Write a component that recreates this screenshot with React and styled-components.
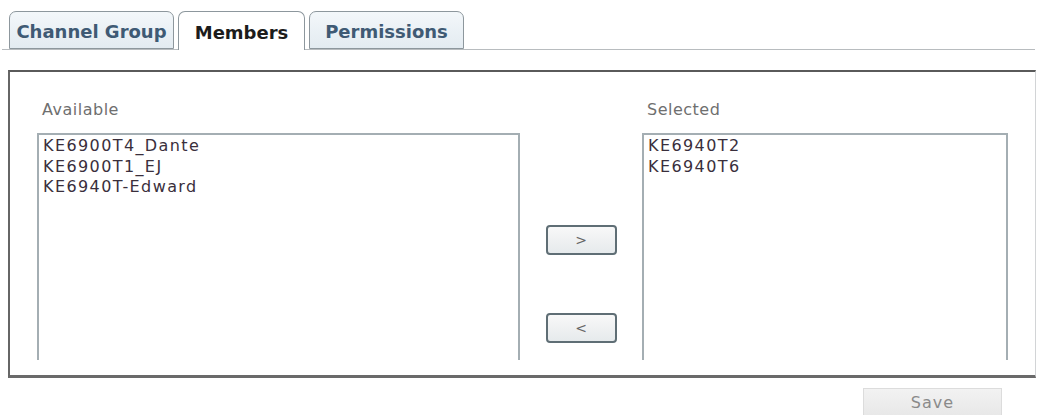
import React from "react";
import styled, { createGlobalStyle } from "styled-components";

const Global = createGlobalStyle`
  html, body { margin: 0; padding: 0; background: #ffffff; }
  body { font-family: "DejaVu Sans", Verdana, sans-serif; }
  * { box-sizing: border-box; }
`;

const Page = styled.div`
  width: 1040px;
  height: 415px;
  overflow: hidden;
  background: #fff;
`;

const TabBar = styled.div`
  display: flex;
  align-items: flex-end;
  gap: 4px;
  margin: 12px 5px 0 2px;
  padding-left: 7px;
  border-bottom: 1px solid #b8bcbf;
  height: 38px;
`;

const Tab = styled.div`
  width: ${(p) => p.$w}px;
  height: ${(p) => (p.$active ? 39 : 38)}px;
  margin-bottom: ${(p) => (p.$active ? -1 : 0)}px;
  display: flex;
  align-items: center;
  justify-content: center;
  padding-top: 3px;
  border: 1px solid #8d979d;
  border-bottom: ${(p) => (p.$active ? "none" : "1px solid #8d979d")};
  border-radius: 7px 7px 0 0;
  background: ${(p) =>
    p.$active ? "#ffffff" : "linear-gradient(#f3f7fa, #e3ebf1)"};
  color: ${(p) => (p.$active ? "#1c1c1c" : "#3f5a74")};
  font-weight: bold;
  font-size: 18px;
  white-space: nowrap;
`;

const Panel = styled.div`
  margin: 20px 4px 0 8px;
  height: 308px;
  border-top: 2px solid #5a5a5a;
  border-left: 2px solid #666;
  border-bottom: 3px solid #6a6a6a;
  border-right: 1px solid #d2d4d6;
  display: grid;
  grid-template-columns: 483px 1fr 366px;
  padding: 28px 27px 15px 27px;
`;

const Column = styled.div`
  display: flex;
  flex-direction: column;
  min-height: 0;
`;

const Label = styled.div`
  font-size: 16px;
  line-height: 20px;
  letter-spacing: 0.5px;
  color: #6f6f6f;
  margin-bottom: 13px;
  padding-left: 5px;
`;

const ListBox = styled.div`
  flex: 1;
  border: 2px solid #a4aeb3;
  border-bottom: none;
  padding: 1px 4px 0 4px;
  font-size: 16px;
  line-height: 20.5px;
  letter-spacing: 1.4px;
  color: #3a2f3c;
`;

const Item = styled.div`
  white-space: nowrap;
`;

const Middle = styled.div`
  display: flex;
  flex-direction: column;
  align-items: center;
  padding-top: 125px;
  gap: 58px;
`;

const MoveButton = styled.button`
  width: 71px;
  height: 30px;
  border: 2px solid #5f6e75;
  border-radius: 4px;
  background: linear-gradient(#f8f8f8, #e6eaec);
  color: #666;
  font-family: "DejaVu Sans", Verdana, sans-serif;
  font-size: 14px;
  padding: 0;
  cursor: pointer;
`;

const Footer = styled.div`
  display: flex;
  justify-content: flex-end;
  padding-right: 38px;
  margin-top: 10px;
`;

const SaveButton = styled.button`
  width: 139px;
  height: 28px;
  border: 1px solid #dcdcdc;
  background: linear-gradient(#f2f2f2, #e8e8e8);
  color: #8a8a8a;
  font-family: "DejaVu Sans", Verdana, sans-serif;
  font-size: 16px;
  letter-spacing: 1px;
  padding: 0;
`;

const available = ["KE6900T4_Dante", "KE6900T1_EJ", "KE6940T-Edward"];
const selected = ["KE6940T2", "KE6940T6"];

export default function App() {
  return (
    <Page>
      <Global />
      <TabBar>
        <Tab $w={165}>Channel Group</Tab>
        <Tab $w={127} $active>Members</Tab>
        <Tab $w={155}>Permissions</Tab>
      </TabBar>
      <Panel>
        <Column>
          <Label>Available</Label>
          <ListBox>
            {available.map((a) => (
              <Item key={a}>{a}</Item>
            ))}
          </ListBox>
        </Column>
        <Middle>
          <MoveButton>&gt;</MoveButton>
          <MoveButton>&lt;</MoveButton>
        </Middle>
        <Column>
          <Label>Selected</Label>
          <ListBox>
            {selected.map((a) => (
              <Item key={a}>{a}</Item>
            ))}
          </ListBox>
        </Column>
      </Panel>
      <Footer>
        <SaveButton>Save</SaveButton>
      </Footer>
    </Page>
  );
}
